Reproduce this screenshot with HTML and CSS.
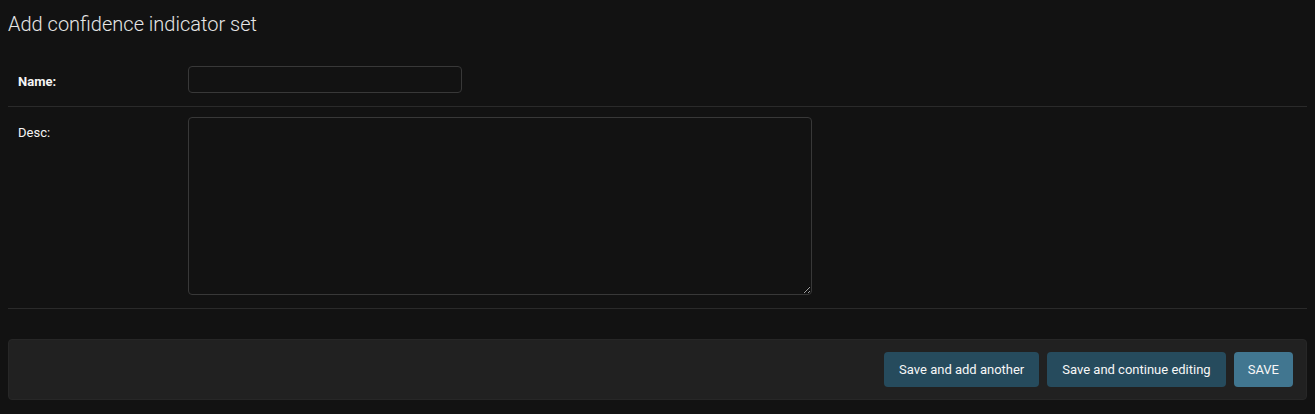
FILE: index.html
```html
<!DOCTYPE html>
<html lang="en">

<head>
  <meta charset="UTF-8">
  <title>Add confidence indicator set</title>
  <link rel="stylesheet" href="styles.css">
</head>

<body>
  <div class="content">
    <h1>Add confidence indicator set</h1>
    <form>
      <fieldset class="module aligned">
        <div class="form-row">
          <label class="required" for="id_name">Name:</label>
          <input type="text" id="id_name" class="vTextField">
        </div>
        <div class="form-row">
          <label for="id_desc">Desc:</label>
          <textarea id="id_desc" class="vLargeTextField"></textarea>
        </div>
      </fieldset>

      <div class="submit-row">
        <button type="button" class="btn">Save and add another</button>
        <button type="button" class="btn">Save and continue editing</button>
        <button type="button" class="btn default">SAVE</button>
      </div>
    </form>
  </div>
</body>

</html>
```

FILE: styles.css
```css
body {
  font-family: Roboto, "Liberation Sans", Arial, sans-serif;
  background-color: #121212;
  color: #f5f5f5;
  margin: 0;
  padding: 8px;
  color-scheme: dark;
}

h1 {
  font-size: 20px;
  font-weight: 300;
  line-height: 24px;
  color: #e6e6e6;
  margin: 4px 0 20px;
}

fieldset {
  border: none;
  margin: 0;
  padding: 0;
}

.form-row {
  display: flex;
  align-items: flex-start;
  padding: 10px 10px 13px;
  border-bottom: 1px solid #2a2a2a;
  font-size: 13px;
}

.form-row label {
  width: 160px;
  min-width: 160px;
  padding: 8px 10px 0 0;
  line-height: 15px;
  color: #f5f5f5;
}

.form-row label.required {
  font-weight: bold;
}

.form-row input,
.form-row textarea {
  box-sizing: border-box;
  background-color: #121212;
  color: #f5f5f5;
  border: 1px solid #383838;
  border-radius: 4px;
  padding: 5px 6px;
  margin: 0;
  font-family: inherit;
  font-size: 13px;
}

.vTextField {
  width: 274px;
  height: 27px;
}

.vLargeTextField {
  width: 624px;
  height: 178px;
}

.submit-row {
  display: flex;
  justify-content: flex-end;
  gap: 8px;
  margin-top: 30px;
  padding: 12px 13px 12px 14px;
  background-color: #212121;
  border: 1px solid #272727;
  border-radius: 4px;
}

.btn {
  font-family: inherit;
  font-size: 13px;
  line-height: 15px;
  padding: 10px 15px;
  border: none;
  border-radius: 4px;
  background-color: #264b5d;
  color: #f7f7f7;
  cursor: pointer;
}

.btn.default {
  padding: 10px 14px;
  background-color: #417690;
}
```
